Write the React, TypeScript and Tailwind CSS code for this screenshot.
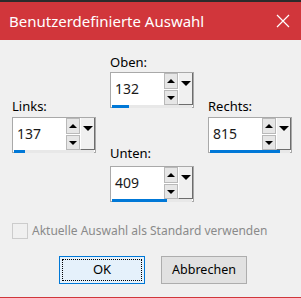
import React from "react";

const font = { fontFamily: '"Noto Sans", "Open Sans", sans-serif' };

function SpinField({
  label,
  value,
  bar,
  labelGap,
}: {
  label: string;
  value: string;
  bar: number;
  labelGap: string;
}) {
  return (
    <div className="w-[84px]">
      <div className={`text-[13px] leading-[16px] text-black ${labelGap}`}>{label}</div>
      <div className="h-[36px] border border-[#a9a9a9] bg-white flex flex-col">
        <div className="flex flex-1">
          <div className="flex-1 pl-[4px] pt-[7px] text-[14px] leading-[18px] text-[#1a1a1a]">
            {value}
          </div>
          <div className="w-[14px] flex flex-col gap-[1px]">
            <div className="h-[16px] bg-[#e6e6e6] border border-[#b9b9b9] flex items-center justify-center">
              <div className="w-0 h-0 border-l-[4px] border-r-[4px] border-b-[4px] border-l-transparent border-r-transparent border-b-black" />
            </div>
            <div className="h-[15px] bg-[#e6e6e6] border border-[#b9b9b9] flex items-center justify-center">
              <div className="w-0 h-0 border-l-[4px] border-r-[4px] border-t-[4px] border-l-transparent border-r-transparent border-t-black" />
            </div>
          </div>
          <div className="w-[15px] bg-[#f0f0f0] border-l border-l-white border-r border-r-[#6d6d6d] border-b border-b-[#6d6d6d] flex justify-center pt-[8px]">
            <div className="w-0 h-0 border-l-[5px] border-r-[5px] border-t-[5px] border-l-transparent border-r-transparent border-t-black" />
          </div>
        </div>
        <div className="h-[3px] bg-[#e8e8e8] mx-[1px] mb-[1px]">
          <div className="h-[3px] bg-[#0078d7]" style={{ width: bar }} />
        </div>
      </div>
    </div>
  );
}

export default function App() {
  return (
    <div className="w-[301px] h-[298px] flex flex-col select-none" style={font}>
      {/* Title bar */}
      <div className="h-[2px] bg-[#2b2b2b]" />
      <div className="h-[38px] bg-[#d1363b] flex items-center justify-between pl-[9px] pr-[11px]">
        <span className="text-white text-[15px] leading-[20px]">Benutzerdefinierte Auswahl</span>
        <svg width="14" height="14" viewBox="0 0 14 14">
          <path d="M1 1 L13 13 M13 1 L1 13" stroke="white" strokeWidth="1.2" />
        </svg>
      </div>

      {/* Body */}
      <div className="flex-1 bg-[#f0f0f0] border-b border-b-[#d1363b] flex flex-col">
        <div className="flex gap-[14px] px-[12px] pt-[14px]">
          <div className="mt-[44px]">
            <SpinField label="Links:" value="137" bar={11} labelGap="mb-[3px]" />
          </div>
          <div className="flex flex-col">
            <SpinField label="Oben:" value="132" bar={17} labelGap="mb-[2px]" />
            <div className="mt-[37px]">
              <SpinField label="Unten:" value="409" bar={55} labelGap="mb-[5px]" />
            </div>
          </div>
          <div className="mt-[44px]">
            <SpinField label="Rechts:" value="815" bar={70} labelGap="mb-[3px]" />
          </div>
        </div>

        {/* Checkbox */}
        <div className="flex items-center gap-[4px] px-[12px] mt-[21px]">
          <div className="w-[16px] h-[16px] border border-[#cccccc] bg-[#f0f0f0]" />
          <span className="text-[12px] leading-[16px] text-[#8a8a8a]">
            Aktuelle Auswahl als Standard verwenden
          </span>
        </div>

        {/* Buttons */}
        <div className="flex gap-[16px] pl-[59px] mt-[17px]">
          <button className="w-[86px] h-[28px] border border-[#0078d7] bg-[#e5f1fb] p-[2px]">
            <div className="w-full h-full border border-dotted border-black flex items-center justify-center text-[13px] text-black">
              OK
            </div>
          </button>
          <button className="w-[86px] h-[28px] border border-[#adadad] bg-[#e1e1e1] flex items-center justify-center text-[12.5px] text-black">
            Abbrechen
          </button>
        </div>
      </div>
    </div>
  );
}
